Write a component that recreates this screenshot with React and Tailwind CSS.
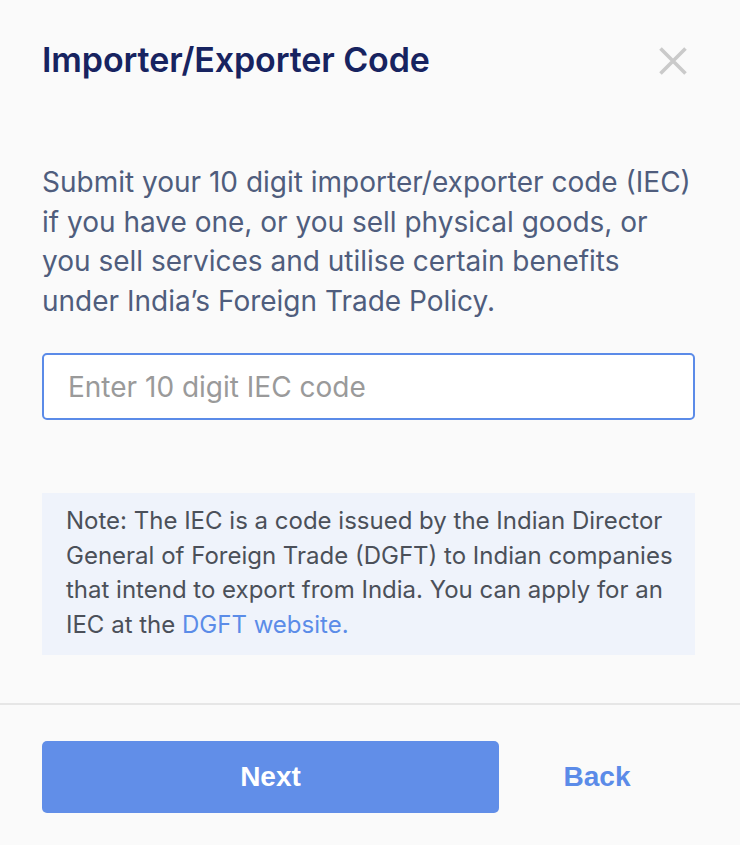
export default function App() {
  return (
    <div
      className="min-h-screen bg-[#fafafa]"
      style={{ fontFamily: "Inter, 'Noto Sans', sans-serif" }}
    >
      <div className="pl-[42px] pr-[45px] pt-[40px]">
        <div className="flex items-start justify-between">
          <h1 className="text-[34px] leading-[40px] font-semibold text-[#172360] tracking-[-0.1px]">
            Importer/Exporter Code
          </h1>
          <button className="mt-[7px] mr-[8px] text-[#cacaca]" aria-label="Close">
            <svg width="28" height="28" viewBox="0 0 28 28" fill="none">
              <path d="M1.5 1.5L26.5 26.5M26.5 1.5L1.5 26.5" stroke="currentColor" strokeWidth="3.6" />
            </svg>
          </button>
        </div>

        <p className="mt-[83px] text-[28px] leading-[39.5px] text-[#4f5d7d]">
          Submit your 10 digit importer/exporter code (IEC) if you have one, or
          you sell physical goods, or you sell services and utilise certain
          benefits under India’s Foreign Trade Policy.
        </p>

        <input
          autoFocus
          type="text"
          placeholder="Enter 10 digit IEC code"
          className="mt-[32px] block w-full h-[67px] rounded-[5px] border-2 border-[#5b8be8] bg-white px-[24px] text-[28px] text-[#333] placeholder:text-[#9a9a9a] outline-none"
        />

        <div className="mt-[73px] bg-[#eff3fb] pl-[24px] pr-[16px] pt-[11px] pb-[13px] text-[24px] leading-[34.5px] text-[#4b5059]">
          Note: The IEC is a code issued by the Indian Director General of
          Foreign Trade (DGFT) to Indian companies that intend to export from
          India. You can apply for an IEC at the{" "}
          <a className="text-[#5b8ce8]">DGFT website.</a>
        </div>
      </div>

      <div className="mt-[48px] h-[2px] bg-[#e6e6e6]" />

      <div
        className="flex items-center pl-[42px] pr-[45px] pt-[36px] pb-[33px]"
        style={{ fontFamily: "'Liberation Sans', Arial, sans-serif" }}
      >
        <button className="h-[72px] w-[457px] rounded-[5px] bg-[#618ee8] text-[28px] font-bold text-white">
          Next
        </button>
        <button className="flex-1 text-center text-[28px] font-bold text-[#5b8be8]">
          Back
        </button>
      </div>
    </div>
  );
}
